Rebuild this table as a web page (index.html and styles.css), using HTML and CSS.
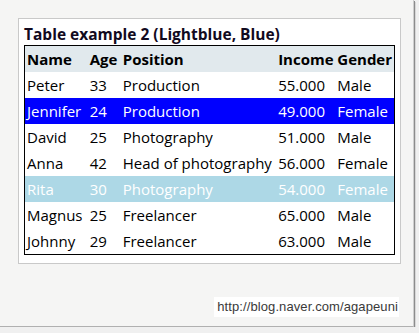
FILE: index.html
```html
<!DOCTYPE html>
<html>
<head>
<meta charset="utf-8">
<link rel="stylesheet" href="styles.css">
</head>
<body>
<div class="page">
  <div class="panel">
    <div class="title">Table example 2 (Lightblue, Blue)</div>
    <table class="data">
      <colgroup>
        <col class="c-name"><col class="c-age"><col class="c-pos"><col class="c-inc"><col class="c-gen">
      </colgroup>
      <thead>
        <tr class="head"><th>Name</th><th>Age</th><th>Position</th><th>Income</th><th>Gender</th></tr>
      </thead>
      <tbody>
        <tr><td>Peter</td><td>33</td><td>Production</td><td>55.000</td><td>Male</td></tr>
        <tr class="sel-blue"><td>Jennifer</td><td>24</td><td>Production</td><td>49.000</td><td>Female</td></tr>
        <tr><td>David</td><td>25</td><td>Photography</td><td>51.000</td><td>Male</td></tr>
        <tr><td>Anna</td><td>42</td><td>Head of photography</td><td>56.000</td><td>Female</td></tr>
        <tr class="sel-light"><td>Rita</td><td>30</td><td>Photography</td><td>54.000</td><td>Female</td></tr>
        <tr><td>Magnus</td><td>25</td><td>Freelancer</td><td>65.000</td><td>Male</td></tr>
        <tr><td>Johnny</td><td>29</td><td>Freelancer</td><td>63.000</td><td>Male</td></tr>
      </tbody>
    </table>
  </div>
  <div class="footer">
    <span class="watermark">http://blog.naver.com/agapeuni</span>
  </div>
</div>
</body>
</html>
```
FILE: styles.css
```css
html, body {
  margin: 0;
  padding: 0;
  background: #f0f0f0;
}
.page {
  width: 414px;
  height: 327px;
  box-sizing: border-box;
  padding: 18px 0 0 18px;
  background: #f5f5f4;
  border-right: 1px solid #cfcfcf;
  border-bottom: 1px solid #b0b0b0;
  box-shadow: 1px 1px 0 #8c8c8c, 2px 2px 0 #d8d8d8;
}
.panel {
  width: 383px;
  height: 246px;
  box-sizing: border-box;
  background: #ffffff;
  border: 1px solid #c9c9c9;
  padding: 0 0 0 5px;
}
.title {
  font-family: "Open Sans", sans-serif;
  font-weight: bold;
  font-size: 15.5px;
  line-height: 22px;
  padding-top: 4px;
  color: #120a1e;
  white-space: nowrap;
}
.data {
  border-collapse: collapse;
  table-layout: fixed;
  width: 371px;
  border: 1px solid #000;
  font-family: "Open Sans", sans-serif;
  font-size: 15px;
  color: #000;
}
.c-name { width: 63px; }
.c-age { width: 33px; }
.c-pos { width: 155px; }
.c-inc { width: 59px; }
.c-gen { width: 59px; }
.data th, .data td {
  padding: 0 0 0 2px;
  height: 26px;
  text-align: left;
  white-space: nowrap;
  overflow: hidden;
  line-height: 26px;
}
.data th {
  font-weight: bold;
}
.head {
  background: #e1e9ed;
}
.sel-blue {
  background: #0000ff;
  color: #ffffff;
}
.sel-light {
  background: #add8e6;
  color: #ffffff;
}
.footer {
  display: flex;
  justify-content: flex-end;
  padding: 33px 14px 0 0;
}
.watermark {
  background: #ffffff;
  font-family: "Liberation Sans", Arial, sans-serif;
  font-size: 13px;
  letter-spacing: 0.1px;
  line-height: 20px;
  color: #3a3a3a;
  padding: 0 1px 0 3px;
}
```
